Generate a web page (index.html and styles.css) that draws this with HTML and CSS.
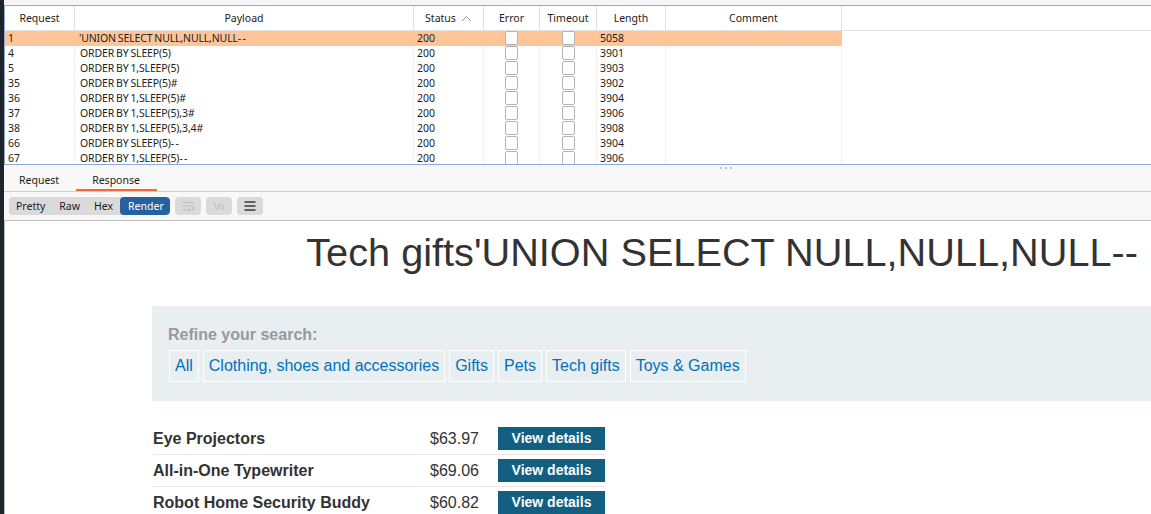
FILE: index.html
```html
<!DOCTYPE html>
<html>
<head>
<meta charset="utf-8">
<link rel="stylesheet" href="styles.css">
</head>
<body>
<div class="app">
  <div class="rail"></div>
  <div class="main">
    <div class="topstrip"></div>
    <div class="results">
      <div class="thead">
        <div class="th c-req">Request</div>
        <div class="th c-pay">Payload</div>
        <div class="th c-st">Status <svg class="sort" width="11" height="7" viewBox="0 0 11 7"><path d="M1 6 L5.5 1.5 L10 6" fill="none" stroke="#9a9a9a" stroke-width="1"/></svg></div>
        <div class="th c-err">Error</div>
        <div class="th c-to">Timeout</div>
        <div class="th c-len">Length</div>
        <div class="th c-com">Comment</div>
        <div class="th c-rest"></div>
      </div>
      <div class="tbody">
        <div class="tr sel"><div class="td c-req">1</div><div class="td c-pay pl">'UNION SELECT NULL,NULL,NULL<span class="dash">--</span></div><div class="td c-st">200</div><div class="td c-err"><span class="cb"></span></div><div class="td c-to"><span class="cb"></span></div><div class="td c-len">5058</div><div class="td c-com"></div></div>
        <div class="tr"><div class="td c-req">4</div><div class="td c-pay">ORDER BY SLEEP(5)</div><div class="td c-st">200</div><div class="td c-err"><span class="cb"></span></div><div class="td c-to"><span class="cb"></span></div><div class="td c-len">3901</div><div class="td c-com"></div></div>
        <div class="tr"><div class="td c-req">5</div><div class="td c-pay">ORDER BY 1,SLEEP(5)</div><div class="td c-st">200</div><div class="td c-err"><span class="cb"></span></div><div class="td c-to"><span class="cb"></span></div><div class="td c-len">3903</div><div class="td c-com"></div></div>
        <div class="tr"><div class="td c-req">35</div><div class="td c-pay">ORDER BY SLEEP(5)#</div><div class="td c-st">200</div><div class="td c-err"><span class="cb"></span></div><div class="td c-to"><span class="cb"></span></div><div class="td c-len">3902</div><div class="td c-com"></div></div>
        <div class="tr"><div class="td c-req">36</div><div class="td c-pay">ORDER BY 1,SLEEP(5)#</div><div class="td c-st">200</div><div class="td c-err"><span class="cb"></span></div><div class="td c-to"><span class="cb"></span></div><div class="td c-len">3904</div><div class="td c-com"></div></div>
        <div class="tr"><div class="td c-req">37</div><div class="td c-pay">ORDER BY 1,SLEEP(5),3#</div><div class="td c-st">200</div><div class="td c-err"><span class="cb"></span></div><div class="td c-to"><span class="cb"></span></div><div class="td c-len">3906</div><div class="td c-com"></div></div>
        <div class="tr"><div class="td c-req">38</div><div class="td c-pay">ORDER BY 1,SLEEP(5),3,4#</div><div class="td c-st">200</div><div class="td c-err"><span class="cb"></span></div><div class="td c-to"><span class="cb"></span></div><div class="td c-len">3908</div><div class="td c-com"></div></div>
        <div class="tr"><div class="td c-req">66</div><div class="td c-pay">ORDER BY SLEEP(5)<span class="dash">--</span></div><div class="td c-st">200</div><div class="td c-err"><span class="cb"></span></div><div class="td c-to"><span class="cb"></span></div><div class="td c-len">3904</div><div class="td c-com"></div></div>
        <div class="tr"><div class="td c-req">67</div><div class="td c-pay">ORDER BY 1,SLEEP(5)<span class="dash">--</span></div><div class="td c-st">200</div><div class="td c-err"><span class="cb"></span></div><div class="td c-to"><span class="cb"></span></div><div class="td c-len">3906</div><div class="td c-com"></div></div>
      </div>
    </div>
    <div class="splitter"><span class="dot"></span><span class="dot"></span><span class="dot"></span></div>
    <div class="tabs">
      <div class="tab tab-req">Request</div>
      <div class="tab tab-resp active">Response</div>
    </div>
    <div class="toolbar">
      <div class="seg">
        <span class="seg-item">Pretty</span>
        <span class="seg-item">Raw</span>
        <span class="seg-item">Hex</span>
        <span class="seg-item on">Render</span>
      </div>
      <span class="ibtn">
        <svg width="14" height="12" viewBox="0 0 14 12"><path d="M1.5 2.5 H12.5 M1.5 6 H10.5 a2 2 0 0 1 0 4 H7 M1.5 9.5 H5" fill="none" stroke="#bdbdbd" stroke-width="1.2"/><path d="M8.3 8.4 L6.6 10 L8.3 11.6" fill="none" stroke="#bdbdbd" stroke-width="1.1"/></svg>
      </span>
      <span class="ibtn ibtn-text">\n</span>
      <span class="ibtn">
        <svg width="14" height="12" viewBox="0 0 14 12"><path d="M1.5 2 H12.5 M1.5 6 H12.5 M1.5 10 H12.5" fill="none" stroke="#3a3a3a" stroke-width="1.3"/></svg>
      </span>
    </div>
    <div class="render">
      <div class="shop">
        <h1 class="title">Tech gifts'UNION SELECT NULL,NULL,NULL--</h1>
        <section class="filter">
          <p class="filter-label">Refine your search:</p>
          <div class="filter-links">
            <a class="flink">All</a>
            <a class="flink">Clothing, shoes and accessories</a>
            <a class="flink">Gifts</a>
            <a class="flink">Pets</a>
            <a class="flink">Tech gifts</a>
            <a class="flink">Toys &amp; Games</a>
          </div>
        </section>
        <div class="products">
          <div class="prow"><span class="pname">Eye Projectors</span><span class="price">$63.97</span><a class="btn">View details</a></div>
          <div class="prow"><span class="pname">All-in-One Typewriter</span><span class="price">$69.06</span><a class="btn">View details</a></div>
          <div class="prow"><span class="pname">Robot Home Security Buddy</span><span class="price">$60.82</span><a class="btn">View details</a></div>
        </div>
      </div>
    </div>
  </div>
</div>
</body>
</html>
```
FILE: styles.css
```css
* { box-sizing: border-box; }
html, body { margin: 0; padding: 0; }
body {
  width: 1151px;
  height: 514px;
  overflow: hidden;
  background: #f8f8f8;
  font-family: "Noto Sans", "DejaVu Sans", sans-serif;
  font-size: 10.5px;
  color: #1c1c1c;
}
.app { display: flex; height: 514px; }
.rail { width: 4px; flex: none; background: #1f232a; }
.main { flex: 1; min-width: 0; display: flex; flex-direction: column; }
.topstrip { height: 5px; flex: none; background: #f5f5f5; }

.results {
  flex: none;
  height: 160px;
  border: 1px solid #8caed6;
  border-right: none;
  background: #fff;
  overflow: hidden;
}
.thead { display: flex; height: 25px; border-bottom: 1px solid #e3e3e3; }
.th {
  height: 24px;
  display: flex;
  align-items: center;
  justify-content: center;
  border-right: 1px solid #e2e2e2;
  flex: none;
}
.th.c-rest { flex: 1; border-right: none; }
.sort { margin-left: 5px; }

.c-req { width: 70px; }
.c-pay { width: 339px; }
.c-st { width: 70px; }
.c-err { width: 56px; }
.c-to { width: 57px; }
.c-len { width: 69px; }
.c-com { width: 176px; }

.tbody { display: flex; flex-direction: column; }
.tr { display: flex; height: 15px; line-height: 15px; width: 837px; flex: none; }
.tr.sel { background: #ffc598; }
.td {
  flex: none;
  height: 15px;
  padding-left: 3px;
  white-space: nowrap;
  overflow: hidden;
  border-right: 1px solid #f1f1f1;
}
.tr.sel .td { border-right-color: transparent; }
.td.c-pay { padding-left: 5px; letter-spacing: -0.15px; word-spacing: -0.6px; }
.td.c-pay.pl { padding-left: 4px; }
.dash { letter-spacing: 1.2px; }
.td.c-err, .td.c-to { display: flex; justify-content: center; padding-left: 0; }
.cb {
  width: 13px;
  height: 14px;
  background: #fff;
  border: 1px solid #b4b4b4;
  border-radius: 2px;
}

.splitter {
  flex: none;
  height: 5px;
  display: flex;
  align-items: center;
  gap: 3px;
  padding-left: 716px;
}
.dot { width: 2px; height: 2px; background: #b0b0b0; border-radius: 1px; }

.tabs {
  flex: none;
  height: 22px;
  display: flex;
  border-bottom: 1px solid #c9cfd1;
}
.tab {
  height: 21px;
  padding-top: 3px;
  line-height: 14px;
  border-bottom: 2px solid transparent;
}
.tab-req { padding-left: 15px; padding-right: 17px; }
.tab-resp { padding-left: 16px; padding-right: 17px; }
.tab.active { border-bottom-color: #f7682f; }

.toolbar {
  flex: none;
  height: 28px;
  display: flex;
  align-items: flex-start;
  padding: 5px 0 0 5px;
  gap: 5px;
}
.seg {
  display: flex;
  height: 18px;
  background: #dadada;
  border-radius: 4px;
  overflow: hidden;
}
.seg-item {
  line-height: 18px;
  padding: 0 7px;
}
.seg-item.on { background: #25619e; color: #fff; border-radius: 4px; padding: 0 6px 0 8px; }
.ibtn {
  width: 26px;
  height: 18px;
  background: #dadada;
  border-radius: 4px;
  display: flex;
  align-items: center;
  justify-content: center;
}
.ibtn-text { color: #bcbcbc; font-size: 11px; line-height: 18px; }

.render {
  flex: 1;
  min-height: 0;
  background: #fff;
  border-top: 1px solid #c5c0c0;
  border-left: 1px solid #bdbdbd;
  overflow: hidden;
  font-family: "Liberation Sans", Arial, sans-serif;
  color: #333;
}
.shop { padding-top: 8px; }
.title {
  margin: 0;
  font-weight: normal;
  font-size: 39.7px;
  line-height: 46px;
  text-align: right;
  padding-right: 13px;
  white-space: nowrap;
  color: #333;
}
.filter {
  margin: 31px 0 0 147px;
  width: 1100px;
  background: #e9eef1;
  padding: 19px 16px 19px;
}
.filter-label {
  margin: 0 0 6px;
  font-size: 16px;
  font-weight: bold;
  line-height: 19px;
  color: #999;
}
.filter-links { display: flex; gap: 4px; margin-left: 1px; }
.flink {
  font-size: 16px;
  line-height: 18px;
  padding: 6px 5px;
  border: 1px solid #fff;
  color: #0071bc;
}
.products {
  margin: 22px 0 0 148px;
  width: 452px;
}
.prow {
  display: grid;
  grid-template-columns: 277px 68px 107px;
  align-items: center;
  padding: 4px 0;
  border-bottom: 1px solid #e6e6e6;
  font-size: 16px;
}
.prow:last-child { border-bottom: none; }
.pname { font-weight: bold; color: #333; }
.price { color: #333; }
.btn {
  height: 23px;
  line-height: 23px;
  background: #125f82;
  color: #fff;
  font-weight: bold;
  font-size: 14px;
  text-align: center;
}
```
